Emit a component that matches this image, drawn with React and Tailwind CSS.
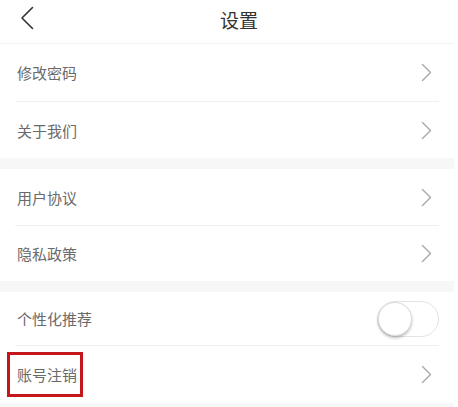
import React from 'react';

const Chevron = () => (
    <svg width="11" height="19" viewBox="0 0 11 19" fill="none" className="shrink-0">
        <path d="M1.5 1.5 L9.5 9.5 L1.5 17.5" stroke="#a8a8a8" strokeWidth="1.4" strokeLinecap="round" strokeLinejoin="round" />
    </svg>
);

const Row = ({ label, right, h, boxed }) => (
    <div className={`flex items-center justify-between pl-[17px] pr-[22px] ${h}`}>
        <span className="relative text-[15px] text-[#6a6a6a] leading-none">
            {label}
            {boxed && (
                <span className="absolute -left-[10px] -top-[15px] w-[76px] h-[45px] border-[3px] border-[#c4161c]" />
            )}
        </span>
        {right || <Chevron />}
    </div>
);

const Divider = () => <div className="h-px bg-[#f0f0f0] mx-[15px]" />;
const Band = ({ h }) => <div className={`bg-[#f7f7f7] ${h}`} />;

const Toggle = () => (
    <div className="relative w-[62px] h-[36px] rounded-full border border-[#e3e3e3] bg-white -mr-[7px]">
        <div className="absolute left-0 top-0 w-[34px] h-[34px] rounded-full bg-white border border-[#dcdcdc] shadow-[0_2px_3px_rgba(0,0,0,0.25)]" />
    </div>
);

export default function App() {
    return (
        <div className="w-full min-h-screen bg-white" style={{ fontFamily: '"Noto Sans CJK SC", "Noto Sans", sans-serif' }}>
            <div className="w-[454px]">
                {/* Header */}
                <div className="relative flex items-center justify-center pl-[24px] h-[44px] border-b border-[#f2f2f2]">
                    <svg width="14" height="24" viewBox="0 0 14 24" fill="none" className="absolute left-[20px] top-[6px]">
                        <path d="M12.5 1.5 L2 12 L12.5 22.5" stroke="#333333" strokeWidth="1.6" strokeLinecap="round" strokeLinejoin="round" />
                    </svg>
                    <span className="text-[19px] text-[#333333] -mt-[2px]">设置</span>
                </div>

                <Row label="修改密码" h="h-[57px]" />
                <Divider />
                <Row label="关于我们" h="h-[56px]" />
                <Band h="h-[11px]" />
                <Row label="用户协议" h="h-[56px]" />
                <Divider />
                <Row label="隐私政策" h="h-[55px]" />
                <Band h="h-[11px]" />
                <Row label="个性化推荐" h="h-[53px]" right={<Toggle />} />
                <Divider />
                <Row label="账号注销" h="h-[57px]" boxed />
                <Band h="h-[10px]" />
            </div>
        </div>
    );
}
